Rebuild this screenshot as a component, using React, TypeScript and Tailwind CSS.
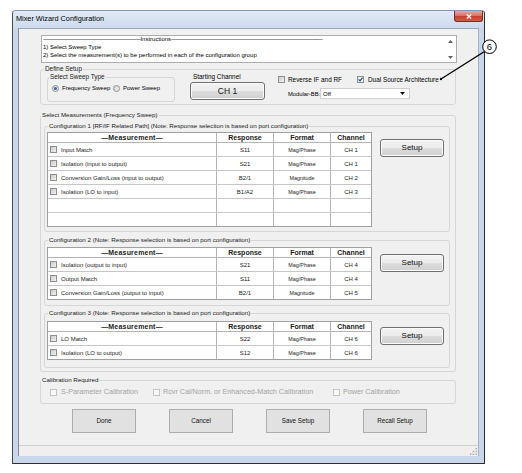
import React from "react";

type Row = [string, string, string, string] | null;

function CheckBox({ checked = false, disabled = false }: { checked?: boolean; disabled?: boolean }) {
  if (disabled) {
    return <span className="block w-[7px] h-[7px] shrink-0 border border-[#c4c4c4] bg-[#f8f8f8]" />;
  }
  if (checked) {
    return (
      <span className="flex w-[7px] h-[7px] shrink-0 border border-[#8e8f8f] bg-linear-to-br from-[#e4ebf5] to-[#fbfdff]">
        <svg width="5" height="5" viewBox="0 0 5 5" className="block">
          <path d="M0.5 2.3 L2 3.9 L4.6 0.6" fill="none" stroke="#1f4aa0" strokeWidth="1.2" />
        </svg>
      </span>
    );
  }
  return <span className="block w-[7px] h-[7px] shrink-0 border border-[#8e8f8f] bg-linear-to-br from-[#c9c9c9] to-[#f3f3f3]" />;
}

function Radio({ on = false }: { on?: boolean }) {
  return (
    <span className="flex items-center justify-center w-[7px] h-[7px] shrink-0 rounded-full border border-[#8e8f8f] bg-linear-to-br from-[#cdcdcd] to-[#f5f5f5]">
      {on && <span className="block w-[3px] h-[3px] rounded-full bg-[#3466b0]" />}
    </span>
  );
}

function Grid({ rows }: { rows: Row[] }) {
  return (
    <div className="w-[325px] shrink-0 border border-[#a0a0a0] bg-white text-[#1b1b1b]">
      <div className="flex h-[10px] border-b border-[#b4b4b4] font-bold text-[7px] leading-[9px]">
        <div className="w-[169px] border-r border-[#b4b4b4] text-center tracking-[0.2px]">—Measurement—</div>
        <div className="w-[57px] border-r border-[#b4b4b4] text-center">Response</div>
        <div className="w-[57px] border-r border-[#b4b4b4] text-center">Format</div>
        <div className="flex-1 text-center">Channel</div>
      </div>
      {rows.map((r, i) => (
        <div
          key={i}
          className={i === rows.length - 1 ? "flex h-[13px]" : "flex h-[14px] border-b border-[#c6c6c6]"}
        >
          <div className="w-[169px] border-r border-[#b4b4b4] flex items-center pl-[2px] gap-[4px] text-[6px] leading-[8px] whitespace-nowrap">
            {r && (
              <>
                <CheckBox />
                <span>{r[0]}</span>
              </>
            )}
          </div>
          <div className="w-[57px] border-r border-[#b4b4b4] flex items-center justify-center text-[6px] leading-[8px]">
            {r ? r[1] : ""}
          </div>
          <div className="w-[57px] border-r border-[#b4b4b4] flex items-center justify-center text-[5.4px] leading-[8px]">
            {r ? r[2] : ""}
          </div>
          <div className="flex-1 flex items-center justify-center text-[6px] leading-[8px]">{r ? r[3] : ""}</div>
        </div>
      ))}
    </div>
  );
}

const win7Btn =
  "flex items-center justify-center border border-[#707070] rounded-[3px] bg-[linear-gradient(#f3f3f3,#ebebeb_50%,#dddddd_50%,#cfcfcf)] shadow-[inset_0_0_0_1px_#fbfbfb] text-[#111]";

function ConfigGroup({
  title,
  rows,
  groupClass,
  tableClass,
  setupClass,
}: {
  title: string;
  rows: Row[];
  groupClass: string;
  tableClass: string;
  setupClass: string;
}) {
  return (
    <fieldset className={groupClass}>
      <legend className="ml-[3px] px-[1px] text-[6.2px] leading-[8px] text-[#1a1a1a] whitespace-nowrap">{title}</legend>
      <div className={tableClass}>
        <Grid rows={rows} />
        <div className={setupClass}>Setup</div>
      </div>
    </fieldset>
  );
}

export default function App() {
  const cfg1: Row[] = [
    ["Input Match", "S11", "Mag/Phase", "CH 1"],
    ["Isolation (input to output)", "S21", "Mag/Phase", "CH 1"],
    ["Conversion Gain/Loss (input to output)", "B2/1", "Magnitude", "CH 2"],
    ["Isolation (LO to input)", "B1/A2", "Mag/Phase", "CH 3"],
    null,
    null,
  ];
  const cfg2: Row[] = [
    ["Isolation (output to input)", "S21", "Mag/Phase", "CH 4"],
    ["Output Match", "S11", "Mag/Phase", "CH 4"],
    ["Conversion Gain/Loss (output to input)", "B2/1", "Magnitude", "CH 5"],
  ];
  const cfg3: Row[] = [
    ["LO Match", "S22", "Mag/Phase", "CH 6"],
    ["Isolation (LO to output)", "S12", "Mag/Phase", "CH 6"],
  ];

  return (
    <div className="relative w-[522px] h-[473px] overflow-hidden bg-white pt-[10px] pl-[12px] font-['Liberation_Sans',Arial,sans-serif] text-black">
      {/* window */}
      <div className="flex flex-col w-[473px] h-[454px] border border-t-[#8597b0] border-l-[#4b4b4b] border-r-[#2e2e2e] border-b-[#2e2e2e] rounded-t-[4px] bg-[#c8d7ea]">
        {/* title bar */}
        <div className="flex items-start h-[17px] shrink-0 bg-linear-to-b from-[#e0eaf7] to-[#cddbed] rounded-t-[3px]">
          <span className="ml-[3px] mt-[3px] text-[7.3px] leading-[9px] text-black whitespace-nowrap">
            Mixer Wizard Configuration
          </span>
          <div className="ml-auto mr-[1px] w-[29px] h-[11px] flex items-center justify-center rounded-b-[3px] border border-t-0 border-[#7a2b22] bg-[linear-gradient(#e6a99b,#d47664_45%,#c2442f_55%,#cd5e48)]">
            <svg width="6" height="5" viewBox="0 0 6 5" className="block">
              <path d="M0.8 0.6 L5.2 4.4 M5.2 0.6 L0.8 4.4" stroke="white" strokeWidth="1.3" />
            </svg>
          </div>
        </div>

        {/* middle */}
        <div className="flex h-[428px] shrink-0">
          <div className="w-[5px] shrink-0" />
          <div className="w-[461px] shrink-0 flex flex-col border-l border-t border-r border-l-[#8a8a8a] border-t-[#9aa8ba] border-r-[#a7b3c2] bg-[#f0f0f0]">
            <div className="h-[416px] shrink-0 flex flex-col items-start">
              {/* instructions */}
              <div className="ml-[22px] mt-[6px] w-[416px] h-[28px] shrink-0 flex border border-[#abadb3] bg-white overflow-hidden">
                <div className="flex-1 pl-[1px] -mt-px text-[6px] leading-[8px] text-black whitespace-nowrap overflow-hidden">
                  <div className="flex">
                    <span className="tracking-[-0.5px]">{"-".repeat(65)}</span>
                    <span>Instructions</span>
                    <span className="tracking-[-0.5px]">{"-".repeat(101)}</span>
                  </div>
                  <div>1) Select Sweep Type</div>
                  <div>2) Select the measurement(s) to be performed in each of the configuration group</div>
                </div>
                <div className="w-[11px] shrink-0 flex flex-col items-center justify-between pt-[4px] pb-[3px]">
                  <svg width="5" height="3" viewBox="0 0 5 3" className="block">
                    <path d="M0 3 L2.5 0 L5 3 Z" fill="#606060" />
                  </svg>
                  <svg width="5" height="3" viewBox="0 0 5 3" className="block">
                    <path d="M0 0 L2.5 3 L5 0 Z" fill="#606060" />
                  </svg>
                </div>
              </div>

              {/* define setup */}
              <fieldset className="ml-[21px] mt-[2px] w-[416px] shrink-0 border border-[#d6d6d6] rounded-[3px]">
                <legend className="ml-[3px] px-[1px] text-[6.4px] leading-[8px] text-[#1a1a1a]">Define Setup</legend>
                <div className="flex items-start pl-[6px] pb-[2px]">
                  <fieldset className="w-[128px] shrink-0 border border-[#d6d6d6] rounded-[3px]">
                    <legend className="ml-[1px] px-[1px] text-[6.4px] leading-[8px] text-[#1a1a1a]">Select Sweep Type</legend>
                    <div className="flex items-center h-[8px] mt-[3px] mb-[9px] pl-[4px] text-[6px] leading-[8px] whitespace-nowrap">
                      <div className="flex items-center gap-[3px] w-[61px] shrink-0">
                        <Radio on />
                        <span>Frequency Sweep</span>
                      </div>
                      <div className="flex items-center gap-[3px]">
                        <Radio />
                        <span>Power Sweep</span>
                      </div>
                    </div>
                  </fieldset>

                  <div className="ml-[15px] w-[75px] shrink-0 flex flex-col">
                    <div className="pl-[3px] text-[6.4px] leading-[8px] whitespace-nowrap">Starting Channel</div>
                    <div className={`mt-[1px] h-[18px] w-[75px] text-[8.5px] ${win7Btn}`}>CH 1</div>
                  </div>

                  <div className="ml-[13px] flex flex-col text-[6.4px] leading-[8px] whitespace-nowrap">
                    <div className="mt-[2px] h-[9px] flex items-center">
                      <div className="w-[79px] shrink-0 flex items-center gap-[3px]">
                        <CheckBox />
                        <span>Reverse IF and RF</span>
                      </div>
                      <div className="flex items-center gap-[4px]">
                        <CheckBox checked />
                        <span>Dual Source Architecture</span>
                      </div>
                    </div>
                    <div className="mt-[4px] h-[11px] flex items-center pl-[10px]">
                      <span className="w-[32px] shrink-0 text-[5.8px]">Modular-BB:</span>
                      <div className="w-[90px] h-[11px] flex items-center justify-between border border-[#cfcfcf] bg-white pl-[2px] pr-[4px]">
                        <span className="text-[6px]">Off</span>
                        <svg width="5" height="3" viewBox="0 0 5 3" className="block">
                          <path d="M0 0 L2.5 3 L5 0 Z" fill="#111" />
                        </svg>
                      </div>
                    </div>
                  </div>
                </div>
              </fieldset>

              {/* select measurements */}
              <fieldset className="ml-[21px] mt-[6px] w-[416px] shrink-0 border border-[#d6d6d6] rounded-[3px]">
                <legend className="ml-0 px-[1px] text-[6.2px] leading-[8px] text-[#1a1a1a] whitespace-nowrap">
                  Select Measurements (Frequency Sweep)
                </legend>
                <div className="flex flex-col pl-[3px] pb-[3px]">
                  <ConfigGroup
                    title="Configuration 1 [RF/IF Related Path] (Note: Response selection is based on port configuration)"
                    rows={cfg1}
                    groupClass="mt-[3px] w-[406px] border border-[#d6d6d6] rounded-[3px]"
                    tableClass="flex items-start pl-[2px] mt-[2px] pb-[4px]"
                    setupClass={`ml-[8px] mt-[7px] w-[64px] h-[18px] text-[8px] ${win7Btn}`}
                  />
                  <ConfigGroup
                    title="Configuration 2 (Note: Response selection is based on port configuration)"
                    rows={cfg2}
                    groupClass="mt-[4px] w-[406px] border border-[#d6d6d6] rounded-[3px]"
                    tableClass="flex items-start pl-[2px] mt-[3px] pb-[5px]"
                    setupClass={`ml-[8px] mt-[7px] w-[64px] h-[18px] text-[8px] ${win7Btn}`}
                  />
                  <ConfigGroup
                    title="Configuration 3 (Note: Response selection is based on port configuration)"
                    rows={cfg3}
                    groupClass="mt-[3px] w-[406px] border border-[#d6d6d6] rounded-[3px]"
                    tableClass="flex items-start pl-[2px] mt-[4px] pb-[7px]"
                    setupClass={`ml-[8px] mt-[6px] w-[64px] h-[18px] text-[8px] ${win7Btn}`}
                  />
                </div>
              </fieldset>

              {/* calibration */}
              <fieldset className="ml-[21px] mt-[4px] w-[416px] shrink-0 border border-[#d6d6d6] rounded-[3px]">
                <legend className="ml-0 px-[1px] text-[6.2px] leading-[8px] text-[#1a1a1a]">Calibration Required</legend>
                <div className="flex items-center h-[8px] box-content pl-[9px] pt-[4px] pb-[7px] text-[7.2px] leading-[8px] text-[#a3a3a3] whitespace-nowrap">
                  <div className="w-[103px] shrink-0 flex items-center gap-[4px]">
                    <CheckBox disabled />
                    <span>S-Parameter Calibration</span>
                  </div>
                  <div className="w-[180px] shrink-0 flex items-center gap-[3px]">
                    <CheckBox disabled />
                    <span>Rcvr Cal/Norm. or Enhanced-Match Calibration</span>
                  </div>
                  <div className="flex items-center gap-[3px]">
                    <CheckBox disabled />
                    <span>Power Calibration</span>
                  </div>
                </div>
              </fieldset>

              {/* buttons */}
              <div className="ml-[53px] mt-[5px] flex gap-[33px] text-[6.3px] text-[#111]">
                <div className="w-[64px] h-[24px] flex items-center justify-center border border-[#adadad] bg-[#e1e1e1]">Done</div>
                <div className="w-[64px] h-[24px] flex items-center justify-center border border-[#adadad] bg-[#e1e1e1]">Cancel</div>
                <div className="w-[64px] h-[24px] flex items-center justify-center border border-[#adadad] bg-[#e1e1e1]">Save Setup</div>
                <div className="w-[64px] h-[24px] flex items-center justify-center border border-[#adadad] bg-[#e1e1e1]">Recall Setup</div>
              </div>
            </div>

            {/* status bar */}
            <div className="h-[11px] shrink-0 border-t border-[#d0d0d0] bg-[#f0eeee] flex justify-end items-end pr-[1px] pb-[1px]">
              <svg width="7" height="7" viewBox="0 0 7 7" className="block">
                <rect x="5.5" y="0" width="1.4" height="1.4" fill="#a8a8a8" />
                <rect x="5.5" y="2.8" width="1.4" height="1.4" fill="#a8a8a8" />
                <rect x="2.7" y="2.8" width="1.4" height="1.4" fill="#a8a8a8" />
                <rect x="5.5" y="5.6" width="1.4" height="1.4" fill="#a8a8a8" />
                <rect x="2.7" y="5.6" width="1.4" height="1.4" fill="#a8a8a8" />
                <rect x="0" y="5.6" width="1.4" height="1.4" fill="#a8a8a8" />
              </svg>
            </div>
          </div>
          <div className="w-[5px] shrink-0" />
        </div>
        <div className="h-[7px] shrink-0" />
      </div>

      {/* callout 6 */}
      <svg className="absolute left-0 top-0 pointer-events-none" width="522" height="473" viewBox="0 0 522 473">
        <line x1="484.5" y1="51.5" x2="441" y2="79" stroke="#000" strokeWidth="1.4" />
        <circle cx="441" cy="79" r="1.2" fill="#000" />
        <circle cx="489.5" cy="46.7" r="6.8" fill="#fff" stroke="#000" strokeWidth="1" />
        <text x="489.5" y="50.2" fontSize="9.5" textAnchor="middle" fontFamily="Liberation Sans, Arial, sans-serif" fill="#000">
          6
        </text>
      </svg>
    </div>
  );
}
